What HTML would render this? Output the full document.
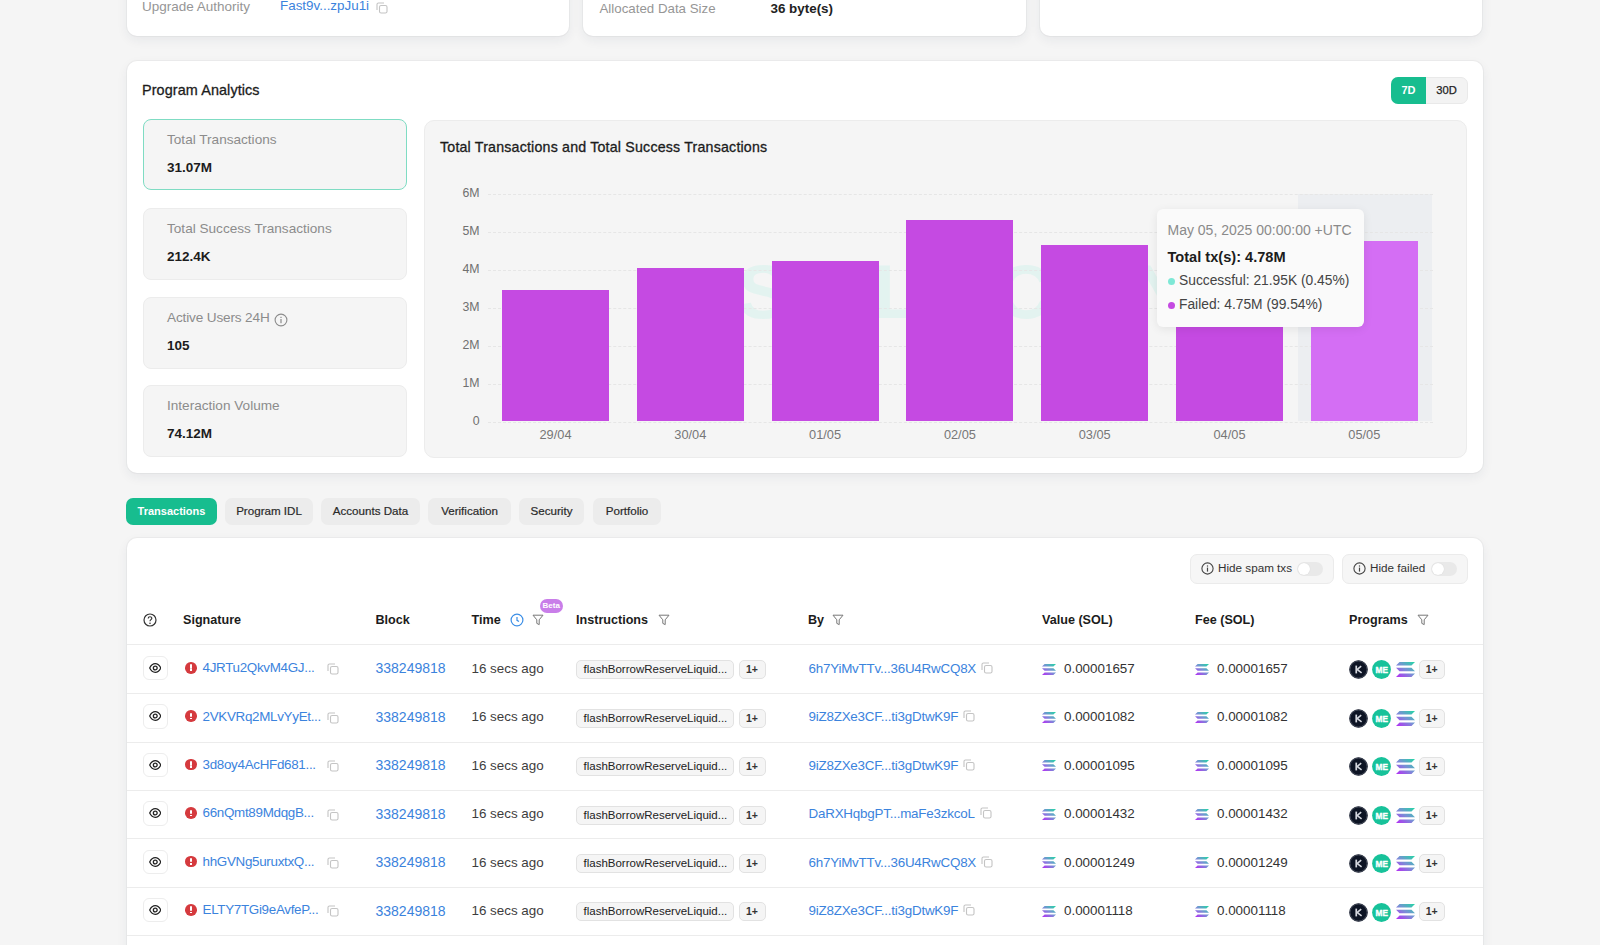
<!DOCTYPE html>
<html><head><meta charset="utf-8">
<style>
*{box-sizing:border-box;margin:0;padding:0}
html,body{width:1600px;height:945px;overflow:hidden;background:#f5f5f5;font-family:"Liberation Sans",sans-serif;color:#1f1f1f}
.abs{position:absolute}
.card{position:absolute;background:#fff;border-radius:10px;box-shadow:0 0 0 1px rgba(0,0,0,0.03),0 4px 12px rgba(30,40,80,0.065)}
.lbl{color:#8a8a8a;font-size:14px}
.link{color:#3b83dd}
.stat{position:absolute;left:143px;width:264px;height:71.5px;background:#f5f5f5;border:1px solid #ececec;border-radius:8px}
.stat .t{position:absolute;left:23px;top:12.2px;font-size:13.6px;color:#8c8c8c;white-space:nowrap}
.stat .v{position:absolute;left:23px;top:40px;font-size:13.5px;font-weight:bold;color:#1c1c1c}
.ylab{position:absolute;width:40px;text-align:right;left:439.6px;font-size:12.3px;color:#707070}
.grid{position:absolute;left:488px;width:945px;border-top:1px dashed #e6e6e6}
.bar{position:absolute;width:107px;background:#c54ae2}
.xlab{position:absolute;width:107px;text-align:center;top:426.6px;font-size:12.8px;color:#777}
.tab{position:absolute;top:498px;height:27px;border-radius:7px;background:#ececec;font-size:11.6px;color:#2a2a2a;text-align:center;line-height:25.5px;-webkit-text-stroke:0.2px #2a2a2a}
.hb{top:553.5px;height:30px;border-radius:7px;background:#f6f6f6;border:1px solid #ebebeb}
.th{top:613px;font-size:12.6px;font-weight:bold;color:#1c1c1c;white-space:nowrap}
.td{font-size:13.4px;white-space:nowrap}
.pill{height:19px;border:1px solid #e2e2e2;background:#f5f5f5;border-radius:5px;font-size:11.5px;color:#222;line-height:17px;padding-left:7px;white-space:nowrap}
</style></head>
<body>
<!-- top cards -->
<div class="card" style="left:127px;top:-20px;width:442px;height:56px"></div>
<div class="card" style="left:583px;top:-20px;width:443px;height:56px"></div>
<div class="card" style="left:1040px;top:-20px;width:442px;height:56px"></div>
<div class="abs lbl" style="left:142px;top:-1.5px;font-size:13.5px;color:#969696">Upgrade Authority</div>
<div class="abs link" style="left:280px;top:-2px;font-size:13.4px">Fast9v...zpJu1i</div><svg class="abs" style="left:376px;top:2px" width="12" height="12" viewBox="0 0 12 12"><rect x="3.5" y="3.5" width="7.5" height="7.5" rx="1.6" fill="none" stroke="#c4c4c4" stroke-width="1.1"/><path d="M1 8 V2.5 C1 1.6 1.6 1 2.5 1 H8" fill="none" stroke="#c4c4c4" stroke-width="1.1"/></svg>
<div class="abs lbl" style="left:599.5px;top:0.5px;font-size:13.3px;color:#969696">Allocated Data Size</div>
<div class="abs" style="left:770.5px;top:0.5px;font-size:13.4px;font-weight:bold;color:#222">36 byte(s)</div>

<!-- analytics card -->
<div class="card" style="left:127px;top:61px;width:1356px;height:412px"></div>
<div class="abs" style="left:142px;top:81.5px;font-size:14.4px;color:#1c1c1c;-webkit-text-stroke:0.3px #1c1c1c;letter-spacing:0.1px;white-space:nowrap">Program Analytics</div>
<div class="abs" style="left:1391px;top:77px;width:76.5px;height:26.7px;border-radius:7px;background:#f3f3f3;border:1px solid #e9e9e9"></div>
<div class="abs" style="left:1391px;top:77px;width:35px;height:26.7px;border-radius:7px 0 0 7px;background:#17bd8f;color:#fff;font-size:11px;font-weight:bold;text-align:center;line-height:26.7px">7D</div>
<div class="abs" style="left:1426px;top:77px;width:41px;height:26.7px;color:#222;font-size:11.2px;-webkit-text-stroke:0.25px #222;text-align:center;line-height:26.7px">30D</div>

<div class="stat" style="top:119.3px;height:71px;border:1.5px solid #7fdcc3">
 <div class="t">Total Transactions</div><div class="v">31.07M</div></div>
<div class="stat" style="top:208px"><div class="t">Total Success Transactions</div><div class="v">212.4K</div></div>
<div class="stat" style="top:297px"><div class="t" style="letter-spacing:-0.15px">Active Users 24H</div><svg class="abs" style="left:129.5px;top:14.5px" width="14" height="14" viewBox="0 0 14 14"><circle cx="7" cy="7" r="5.9" fill="none" stroke="#8c8c8c" stroke-width="1.1"/><rect x="6.4" y="6" width="1.2" height="4.2" fill="#8c8c8c"/><rect x="6.4" y="3.8" width="1.2" height="1.2" fill="#8c8c8c"/></svg><div class="v">105</div></div>
<div class="stat" style="top:385px"><div class="t">Interaction Volume</div><div class="v">74.12M</div></div>

<!-- chart -->
<div class="abs" style="left:424px;top:120px;width:1043px;height:338px;background:#f5f5f5;border:1px solid #ececec;border-radius:10px"></div>
<div class="abs" style="left:440px;top:139.3px;font-size:14.2px;color:#1c1c1c;-webkit-text-stroke:0.3px #1c1c1c;letter-spacing:0.2px;white-space:nowrap">Total Transactions and Total Success Transactions</div>
<div id="chart">
<div class="abs" style="left:738px;top:248px;font-size:76px;font-weight:bold;color:#e3f3f0;letter-spacing:13px;white-space:nowrap">SOLSCAN</div>
<div class="abs" style="left:1298px;top:194px;width:134px;height:227px;background:#eceef1"></div>
<div class="grid" style="top:194.1px"></div>
<div class="ylab" style="top:186.3px">6M</div>
<div class="grid" style="top:232.0px"></div>
<div class="ylab" style="top:224.2px">5M</div>
<div class="grid" style="top:269.9px"></div>
<div class="ylab" style="top:262.1px">4M</div>
<div class="grid" style="top:307.8px"></div>
<div class="ylab" style="top:300.0px">3M</div>
<div class="grid" style="top:345.7px"></div>
<div class="ylab" style="top:337.9px">2M</div>
<div class="grid" style="top:383.6px"></div>
<div class="ylab" style="top:375.8px">1M</div>
<div class="grid" style="top:421.5px"></div>
<div class="ylab" style="top:413.7px">0</div>
<div class="bar" style="left:502.0px;top:290px;height:131px;background:#c54ae2"></div>
<div class="xlab" style="left:502.0px">29/04</div>
<div class="bar" style="left:636.8px;top:268px;height:153px;background:#c54ae2"></div>
<div class="xlab" style="left:636.8px">30/04</div>
<div class="bar" style="left:771.6px;top:261px;height:160px;background:#c54ae2"></div>
<div class="xlab" style="left:771.6px">01/05</div>
<div class="bar" style="left:906.4px;top:219.5px;height:201.5px;background:#c54ae2"></div>
<div class="xlab" style="left:906.4px">02/05</div>
<div class="bar" style="left:1041.2px;top:245px;height:176px;background:#c54ae2"></div>
<div class="xlab" style="left:1041.2px">03/05</div>
<div class="bar" style="left:1176.0px;top:244px;height:177px;background:#c54ae2"></div>
<div class="xlab" style="left:1176.0px">04/05</div>
<div class="bar" style="left:1310.8px;top:240.5px;height:180.5px;background:#d46ef4"></div>
<div class="xlab" style="left:1310.8px">05/05</div>
<div class="abs" style="left:1157px;top:209px;width:207px;height:118px;background:#fafafa;border-radius:6px;box-shadow:0 2px 10px rgba(0,0,0,0.08)">
<div class="abs" style="left:10.5px;top:13.3px;font-size:14px;color:#8a8a8a;white-space:nowrap">May 05, 2025 00:00:00 +UTC</div>
<div class="abs" style="left:10.5px;top:40px;font-size:14.6px;font-weight:bold;color:#1c1c1c;white-space:nowrap">Total tx(s): 4.78M</div>
<div class="abs" style="left:10.5px;top:68.5px;width:7px;height:7px;border-radius:50%;background:#7ee8d6"></div>
<div class="abs" style="left:22px;top:63.8px;font-size:13.8px;color:#444;white-space:nowrap">Successful: 21.95K (0.45%)</div>
<div class="abs" style="left:10.5px;top:92.5px;width:7px;height:7px;border-radius:50%;background:#c54ae2"></div>
<div class="abs" style="left:22px;top:87.5px;font-size:13.8px;color:#444;white-space:nowrap">Failed: 4.75M (99.54%)</div>
</div>
</div>

<!-- tabs -->
<div class="tab" style="left:126px;width:91px;background:#17bd8f;color:#fff;font-weight:bold;font-size:11px;-webkit-text-stroke:0;line-height:26.5px">Transactions</div>
<div class="tab" style="left:225px;width:88px">Program IDL</div>
<div class="tab" style="left:321px;width:99px">Accounts Data</div>
<div class="tab" style="left:428px;width:83px">Verification</div>
<div class="tab" style="left:519px;width:65px">Security</div>
<div class="tab" style="left:593px;width:68px">Portfolio</div>

<!-- table card -->
<div class="card" style="left:127px;top:538px;width:1356px;height:500px"></div>
<div id="table">
<svg width="0" height="0" style="position:absolute"><defs><linearGradient id="sg" x1="0" y1="1" x2="1" y2="0"><stop offset="0" stop-color="#b62cf5"/><stop offset="0.5" stop-color="#7a8fd6"/><stop offset="1" stop-color="#22d8a4"/></linearGradient></defs></svg>
<div class="abs hb" style="left:1190px;width:144px"></div>
<svg class="abs" style="left:1201px;top:562px" width="13" height="13" viewBox="0 0 13 13"><circle cx="6.5" cy="6.5" r="5.6" fill="none" stroke="#444" stroke-width="1.1"/><rect x="5.9" y="5.6" width="1.2" height="4" fill="#444"/><rect x="5.9" y="3.4" width="1.2" height="1.2" fill="#444"/></svg>
<div class="abs" style="left:1218px;top:561px;font-size:11.7px;color:#333;white-space:nowrap">Hide spam txs</div>
<div class="abs" style="left:1297px;top:562px;width:26px;height:14px;border-radius:7px;background:#e9e9e9"><div class="abs" style="left:1px;top:1px;width:12px;height:12px;border-radius:50%;background:#fff;box-shadow:0 0 1px rgba(0,0,0,.15)"></div></div>
<div class="abs hb" style="left:1342px;width:126px"></div>
<svg class="abs" style="left:1353px;top:562px" width="13" height="13" viewBox="0 0 13 13"><circle cx="6.5" cy="6.5" r="5.6" fill="none" stroke="#444" stroke-width="1.1"/><rect x="5.9" y="5.6" width="1.2" height="4" fill="#444"/><rect x="5.9" y="3.4" width="1.2" height="1.2" fill="#444"/></svg>
<div class="abs" style="left:1370px;top:561px;font-size:11.7px;color:#333;white-space:nowrap">Hide failed</div>
<div class="abs" style="left:1431px;top:562px;width:26px;height:14px;border-radius:7px;background:#e9e9e9"><div class="abs" style="left:1px;top:1px;width:12px;height:12px;border-radius:50%;background:#fff;box-shadow:0 0 1px rgba(0,0,0,.15)"></div></div>
<svg class="abs" style="left:143px;top:613px" width="14" height="14" viewBox="0 0 14 14"><circle cx="7" cy="7" r="6" fill="none" stroke="#333" stroke-width="1.2"/><path d="M5.2 5.4 C5.2 3.2 8.8 3.2 8.8 5.3 C8.8 6.6 7 6.7 7 8.2" fill="none" stroke="#333" stroke-width="1.2"/><circle cx="7" cy="10.2" r="0.8" fill="#333"/></svg>
<div class="abs th" style="left:183px">Signature</div>
<div class="abs th" style="left:375.5px">Block</div>
<div class="abs th" style="left:471.5px">Time</div>
<div class="abs th" style="left:576px">Instructions</div>
<div class="abs th" style="left:808px">By</div>
<div class="abs th" style="left:1042px">Value (SOL)</div>
<div class="abs th" style="left:1195px">Fee (SOL)</div>
<div class="abs th" style="left:1349px">Programs</div>
<svg class="abs" style="left:509.5px;top:613px" width="14" height="14" viewBox="0 0 14 14"><circle cx="7" cy="7" r="5.9" fill="none" stroke="#3b8ee6" stroke-width="1.2"/><path d="M7 4 V7.3 L9 8.6" fill="none" stroke="#3b8ee6" stroke-width="1.2"/></svg>
<svg class="abs" style="left:531.5px;top:614px" width="12" height="12" viewBox="0 0 12 12"><path d="M1 1.2 H11 L7.2 5.8 V10.6 L4.8 9.4 V5.8 Z" fill="none" stroke="#777" stroke-width="1" stroke-linejoin="round"/></svg>
<div class="abs" style="left:539.5px;top:599px;width:23.5px;height:13.5px;border-radius:7px;background:#c97ee9;color:#fff;font-size:8px;font-weight:bold;text-align:center;line-height:13.5px">Beta</div>
<svg class="abs" style="left:657.5px;top:614px" width="12" height="12" viewBox="0 0 12 12"><path d="M1 1.2 H11 L7.2 5.8 V10.6 L4.8 9.4 V5.8 Z" fill="none" stroke="#777" stroke-width="1" stroke-linejoin="round"/></svg>
<svg class="abs" style="left:832px;top:614px" width="12" height="12" viewBox="0 0 12 12"><path d="M1 1.2 H11 L7.2 5.8 V10.6 L4.8 9.4 V5.8 Z" fill="none" stroke="#777" stroke-width="1" stroke-linejoin="round"/></svg>
<svg class="abs" style="left:1416.5px;top:614px" width="12" height="12" viewBox="0 0 12 12"><path d="M1 1.2 H11 L7.2 5.8 V10.6 L4.8 9.4 V5.8 Z" fill="none" stroke="#777" stroke-width="1" stroke-linejoin="round"/></svg>
<div class="abs" style="left:127px;top:644px;width:1356px;height:1px;background:#ececec"></div>
<div class="abs" style="left:127px;top:693.05px;width:1356px;height:1px;background:#ececec"></div>
<div class="abs" style="left:143.2px;top:655.72px;width:24.5px;height:24.5px;border:1px solid #ededed;border-radius:6px;display:flex;align-items:center;justify-content:center"><svg width="12.5" height="10" viewBox="0 0 12.5 10" style="margin-left:-1px"><path d="M0.7 5 C2.4 1.5 4.4 0.7 6.25 0.7 C8.1 0.7 10.1 1.5 11.8 5 C10.1 8.5 8.1 9.3 6.25 9.3 C4.4 9.3 2.4 8.5 0.7 5 Z" fill="none" stroke="#222" stroke-width="1.25"/><circle cx="6.25" cy="5" r="1.9" fill="none" stroke="#222" stroke-width="1.3"/></svg></div>
<div class="abs" style="left:185.2px;top:661.92px;width:11.6px;height:11.6px;border-radius:50%;background:#d53a3e"><div class="abs" style="left:4.6px;top:2.3px;width:1.8px;height:4.4px;background:#fff;border-radius:1px"></div><div class="abs" style="left:4.6px;top:7.4px;width:1.8px;height:1.6px;background:#fff"></div></div>
<div class="abs td link" style="left:202.5px;top:660.12px;letter-spacing:-0.3px">4JRTu2QkvM4GJ...</div>
<svg class="abs" style="left:327px;top:663.22px" width="12" height="12" viewBox="0 0 12 12"><rect x="3.5" y="3.5" width="7.5" height="7.5" rx="1.6" fill="none" stroke="#c4c4c4" stroke-width="1.1"/><path d="M1 8 V2.5 C1 1.6 1.6 1 2.5 1 H8" fill="none" stroke="#c4c4c4" stroke-width="1.1"/></svg>
<div class="abs td link" style="left:375.5px;top:660.32px;font-size:14px">338249818</div>
<div class="abs td" style="left:471.5px;top:660.72px;color:#3d3d3d">16 secs ago</div>
<div class="abs pill" style="left:575.5px;top:660.22px;width:158.5px">flashBorrowReserveLiquid...</div>
<div class="abs pill" style="left:738.5px;top:660.22px;width:27px;text-align:center;padding:0;font-weight:bold;font-size:10.5px;color:#333">1+</div>
<div class="abs td link" style="left:808.5px;top:660.72px;white-space:nowrap"><span style="letter-spacing:-0.22px">6h7YiMvTTv...36U4RwCQ8X</span><svg style="margin-left:5px;vertical-align:-1px" width="12" height="12" viewBox="0 0 12 12"><rect x="3.5" y="3.5" width="7.5" height="7.5" rx="1.6" fill="none" stroke="#c4c4c4" stroke-width="1.1"/><path d="M1 8 V2.5 C1 1.6 1.6 1 2.5 1 H8" fill="none" stroke="#c4c4c4" stroke-width="1.1"/></svg></div>
<div class="abs td" style="left:1064px;top:660.72px;color:#333">0.00001657</div>
<svg class="abs" style="left:1042px;top:663.52px" width="14" height="11" viewBox="0 0 14 11"><path d="M2.6 0 H14 L11.4 2.6 H0 Z M0 4.2 H11.4 L14 6.8 H2.6 Z M2.6 8.4 H14 L11.4 11 H0 Z" fill="url(#sg)"/></svg>
<div class="abs td" style="left:1217px;top:660.72px;color:#333">0.00001657</div>
<svg class="abs" style="left:1195px;top:663.52px" width="14" height="11" viewBox="0 0 14 11"><path d="M2.6 0 H14 L11.4 2.6 H0 Z M0 4.2 H11.4 L14 6.8 H2.6 Z M2.6 8.4 H14 L11.4 11 H0 Z" fill="url(#sg)"/></svg>
<svg class="abs" style="left:1349px;top:660.42px" width="19" height="19" viewBox="0 0 19 19"><circle cx="9.5" cy="9.5" r="9.3" fill="#0d1424"/><circle cx="9.5" cy="9.5" r="8.5" fill="none" stroke="#5c6270" stroke-width="0.7"/><rect x="6.4" y="5.6" width="1.7" height="7.8" fill="#d4d7de"/><path d="M8 9.6 L12.2 6.2 M8 9.4 L12.6 12.9" stroke="#d4d7de" stroke-width="1.6" fill="none"/></svg>
<svg class="abs" style="left:1372px;top:660.42px" width="19" height="19" viewBox="0 0 19 19"><circle cx="9.5" cy="9.5" r="9.4" fill="#17c29a"/><text x="3.6" y="12.6" font-family="Liberation Sans" font-weight="bold" font-size="8.6" fill="#fff" stroke="#fff" stroke-width="0.35" textLength="12.4" lengthAdjust="spacingAndGlyphs">ME</text></svg>
<svg class="abs" style="left:1395.5px;top:662.22px" width="19" height="15" viewBox="0 0 14 11"><path d="M2.6 0 H14 L11.4 2.6 H0 Z M0 4.2 H11.4 L14 6.8 H2.6 Z M2.6 8.4 H14 L11.4 11 H0 Z" fill="url(#sg)"/></svg>
<div class="abs pill" style="left:1419px;top:660.22px;width:25.5px;text-align:center;padding:0;font-weight:bold;font-size:10.5px;color:#333">1+</div>
<div class="abs" style="left:127px;top:741.50px;width:1356px;height:1px;background:#ececec"></div>
<div class="abs" style="left:143.2px;top:704.17px;width:24.5px;height:24.5px;border:1px solid #ededed;border-radius:6px;display:flex;align-items:center;justify-content:center"><svg width="12.5" height="10" viewBox="0 0 12.5 10" style="margin-left:-1px"><path d="M0.7 5 C2.4 1.5 4.4 0.7 6.25 0.7 C8.1 0.7 10.1 1.5 11.8 5 C10.1 8.5 8.1 9.3 6.25 9.3 C4.4 9.3 2.4 8.5 0.7 5 Z" fill="none" stroke="#222" stroke-width="1.25"/><circle cx="6.25" cy="5" r="1.9" fill="none" stroke="#222" stroke-width="1.3"/></svg></div>
<div class="abs" style="left:185.2px;top:710.37px;width:11.6px;height:11.6px;border-radius:50%;background:#d53a3e"><div class="abs" style="left:4.6px;top:2.3px;width:1.8px;height:4.4px;background:#fff;border-radius:1px"></div><div class="abs" style="left:4.6px;top:7.4px;width:1.8px;height:1.6px;background:#fff"></div></div>
<div class="abs td link" style="left:202.5px;top:708.57px;letter-spacing:-0.3px">2VKVRq2MLvYyEt...</div>
<svg class="abs" style="left:327px;top:711.6700000000001px" width="12" height="12" viewBox="0 0 12 12"><rect x="3.5" y="3.5" width="7.5" height="7.5" rx="1.6" fill="none" stroke="#c4c4c4" stroke-width="1.1"/><path d="M1 8 V2.5 C1 1.6 1.6 1 2.5 1 H8" fill="none" stroke="#c4c4c4" stroke-width="1.1"/></svg>
<div class="abs td link" style="left:375.5px;top:708.77px;font-size:14px">338249818</div>
<div class="abs td" style="left:471.5px;top:709.17px;color:#3d3d3d">16 secs ago</div>
<div class="abs pill" style="left:575.5px;top:708.67px;width:158.5px">flashBorrowReserveLiquid...</div>
<div class="abs pill" style="left:738.5px;top:708.67px;width:27px;text-align:center;padding:0;font-weight:bold;font-size:10.5px;color:#333">1+</div>
<div class="abs td link" style="left:808.5px;top:709.17px;white-space:nowrap"><span style="letter-spacing:-0.22px">9iZ8ZXe3CF...ti3gDtwK9F</span><svg style="margin-left:5px;vertical-align:-1px" width="12" height="12" viewBox="0 0 12 12"><rect x="3.5" y="3.5" width="7.5" height="7.5" rx="1.6" fill="none" stroke="#c4c4c4" stroke-width="1.1"/><path d="M1 8 V2.5 C1 1.6 1.6 1 2.5 1 H8" fill="none" stroke="#c4c4c4" stroke-width="1.1"/></svg></div>
<div class="abs td" style="left:1064px;top:709.17px;color:#333">0.00001082</div>
<svg class="abs" style="left:1042px;top:711.97px" width="14" height="11" viewBox="0 0 14 11"><path d="M2.6 0 H14 L11.4 2.6 H0 Z M0 4.2 H11.4 L14 6.8 H2.6 Z M2.6 8.4 H14 L11.4 11 H0 Z" fill="url(#sg)"/></svg>
<div class="abs td" style="left:1217px;top:709.17px;color:#333">0.00001082</div>
<svg class="abs" style="left:1195px;top:711.97px" width="14" height="11" viewBox="0 0 14 11"><path d="M2.6 0 H14 L11.4 2.6 H0 Z M0 4.2 H11.4 L14 6.8 H2.6 Z M2.6 8.4 H14 L11.4 11 H0 Z" fill="url(#sg)"/></svg>
<svg class="abs" style="left:1349px;top:708.87px" width="19" height="19" viewBox="0 0 19 19"><circle cx="9.5" cy="9.5" r="9.3" fill="#0d1424"/><circle cx="9.5" cy="9.5" r="8.5" fill="none" stroke="#5c6270" stroke-width="0.7"/><rect x="6.4" y="5.6" width="1.7" height="7.8" fill="#d4d7de"/><path d="M8 9.6 L12.2 6.2 M8 9.4 L12.6 12.9" stroke="#d4d7de" stroke-width="1.6" fill="none"/></svg>
<svg class="abs" style="left:1372px;top:708.87px" width="19" height="19" viewBox="0 0 19 19"><circle cx="9.5" cy="9.5" r="9.4" fill="#17c29a"/><text x="3.6" y="12.6" font-family="Liberation Sans" font-weight="bold" font-size="8.6" fill="#fff" stroke="#fff" stroke-width="0.35" textLength="12.4" lengthAdjust="spacingAndGlyphs">ME</text></svg>
<svg class="abs" style="left:1395.5px;top:710.6700000000001px" width="19" height="15" viewBox="0 0 14 11"><path d="M2.6 0 H14 L11.4 2.6 H0 Z M0 4.2 H11.4 L14 6.8 H2.6 Z M2.6 8.4 H14 L11.4 11 H0 Z" fill="url(#sg)"/></svg>
<div class="abs pill" style="left:1419px;top:708.67px;width:25.5px;text-align:center;padding:0;font-weight:bold;font-size:10.5px;color:#333">1+</div>
<div class="abs" style="left:127px;top:789.95px;width:1356px;height:1px;background:#ececec"></div>
<div class="abs" style="left:143.2px;top:752.62px;width:24.5px;height:24.5px;border:1px solid #ededed;border-radius:6px;display:flex;align-items:center;justify-content:center"><svg width="12.5" height="10" viewBox="0 0 12.5 10" style="margin-left:-1px"><path d="M0.7 5 C2.4 1.5 4.4 0.7 6.25 0.7 C8.1 0.7 10.1 1.5 11.8 5 C10.1 8.5 8.1 9.3 6.25 9.3 C4.4 9.3 2.4 8.5 0.7 5 Z" fill="none" stroke="#222" stroke-width="1.25"/><circle cx="6.25" cy="5" r="1.9" fill="none" stroke="#222" stroke-width="1.3"/></svg></div>
<div class="abs" style="left:185.2px;top:758.82px;width:11.6px;height:11.6px;border-radius:50%;background:#d53a3e"><div class="abs" style="left:4.6px;top:2.3px;width:1.8px;height:4.4px;background:#fff;border-radius:1px"></div><div class="abs" style="left:4.6px;top:7.4px;width:1.8px;height:1.6px;background:#fff"></div></div>
<div class="abs td link" style="left:202.5px;top:757.02px;letter-spacing:-0.3px">3d8oy4AcHFd681...</div>
<svg class="abs" style="left:327px;top:760.12px" width="12" height="12" viewBox="0 0 12 12"><rect x="3.5" y="3.5" width="7.5" height="7.5" rx="1.6" fill="none" stroke="#c4c4c4" stroke-width="1.1"/><path d="M1 8 V2.5 C1 1.6 1.6 1 2.5 1 H8" fill="none" stroke="#c4c4c4" stroke-width="1.1"/></svg>
<div class="abs td link" style="left:375.5px;top:757.22px;font-size:14px">338249818</div>
<div class="abs td" style="left:471.5px;top:757.62px;color:#3d3d3d">16 secs ago</div>
<div class="abs pill" style="left:575.5px;top:757.12px;width:158.5px">flashBorrowReserveLiquid...</div>
<div class="abs pill" style="left:738.5px;top:757.12px;width:27px;text-align:center;padding:0;font-weight:bold;font-size:10.5px;color:#333">1+</div>
<div class="abs td link" style="left:808.5px;top:757.62px;white-space:nowrap"><span style="letter-spacing:-0.22px">9iZ8ZXe3CF...ti3gDtwK9F</span><svg style="margin-left:5px;vertical-align:-1px" width="12" height="12" viewBox="0 0 12 12"><rect x="3.5" y="3.5" width="7.5" height="7.5" rx="1.6" fill="none" stroke="#c4c4c4" stroke-width="1.1"/><path d="M1 8 V2.5 C1 1.6 1.6 1 2.5 1 H8" fill="none" stroke="#c4c4c4" stroke-width="1.1"/></svg></div>
<div class="abs td" style="left:1064px;top:757.62px;color:#333">0.00001095</div>
<svg class="abs" style="left:1042px;top:760.42px" width="14" height="11" viewBox="0 0 14 11"><path d="M2.6 0 H14 L11.4 2.6 H0 Z M0 4.2 H11.4 L14 6.8 H2.6 Z M2.6 8.4 H14 L11.4 11 H0 Z" fill="url(#sg)"/></svg>
<div class="abs td" style="left:1217px;top:757.62px;color:#333">0.00001095</div>
<svg class="abs" style="left:1195px;top:760.42px" width="14" height="11" viewBox="0 0 14 11"><path d="M2.6 0 H14 L11.4 2.6 H0 Z M0 4.2 H11.4 L14 6.8 H2.6 Z M2.6 8.4 H14 L11.4 11 H0 Z" fill="url(#sg)"/></svg>
<svg class="abs" style="left:1349px;top:757.32px" width="19" height="19" viewBox="0 0 19 19"><circle cx="9.5" cy="9.5" r="9.3" fill="#0d1424"/><circle cx="9.5" cy="9.5" r="8.5" fill="none" stroke="#5c6270" stroke-width="0.7"/><rect x="6.4" y="5.6" width="1.7" height="7.8" fill="#d4d7de"/><path d="M8 9.6 L12.2 6.2 M8 9.4 L12.6 12.9" stroke="#d4d7de" stroke-width="1.6" fill="none"/></svg>
<svg class="abs" style="left:1372px;top:757.32px" width="19" height="19" viewBox="0 0 19 19"><circle cx="9.5" cy="9.5" r="9.4" fill="#17c29a"/><text x="3.6" y="12.6" font-family="Liberation Sans" font-weight="bold" font-size="8.6" fill="#fff" stroke="#fff" stroke-width="0.35" textLength="12.4" lengthAdjust="spacingAndGlyphs">ME</text></svg>
<svg class="abs" style="left:1395.5px;top:759.12px" width="19" height="15" viewBox="0 0 14 11"><path d="M2.6 0 H14 L11.4 2.6 H0 Z M0 4.2 H11.4 L14 6.8 H2.6 Z M2.6 8.4 H14 L11.4 11 H0 Z" fill="url(#sg)"/></svg>
<div class="abs pill" style="left:1419px;top:757.12px;width:25.5px;text-align:center;padding:0;font-weight:bold;font-size:10.5px;color:#333">1+</div>
<div class="abs" style="left:127px;top:838.40px;width:1356px;height:1px;background:#ececec"></div>
<div class="abs" style="left:143.2px;top:801.07px;width:24.5px;height:24.5px;border:1px solid #ededed;border-radius:6px;display:flex;align-items:center;justify-content:center"><svg width="12.5" height="10" viewBox="0 0 12.5 10" style="margin-left:-1px"><path d="M0.7 5 C2.4 1.5 4.4 0.7 6.25 0.7 C8.1 0.7 10.1 1.5 11.8 5 C10.1 8.5 8.1 9.3 6.25 9.3 C4.4 9.3 2.4 8.5 0.7 5 Z" fill="none" stroke="#222" stroke-width="1.25"/><circle cx="6.25" cy="5" r="1.9" fill="none" stroke="#222" stroke-width="1.3"/></svg></div>
<div class="abs" style="left:185.2px;top:807.27px;width:11.6px;height:11.6px;border-radius:50%;background:#d53a3e"><div class="abs" style="left:4.6px;top:2.3px;width:1.8px;height:4.4px;background:#fff;border-radius:1px"></div><div class="abs" style="left:4.6px;top:7.4px;width:1.8px;height:1.6px;background:#fff"></div></div>
<div class="abs td link" style="left:202.5px;top:805.47px;letter-spacing:-0.3px">66nQmt89MdqgB...</div>
<svg class="abs" style="left:327px;top:808.57px" width="12" height="12" viewBox="0 0 12 12"><rect x="3.5" y="3.5" width="7.5" height="7.5" rx="1.6" fill="none" stroke="#c4c4c4" stroke-width="1.1"/><path d="M1 8 V2.5 C1 1.6 1.6 1 2.5 1 H8" fill="none" stroke="#c4c4c4" stroke-width="1.1"/></svg>
<div class="abs td link" style="left:375.5px;top:805.67px;font-size:14px">338249818</div>
<div class="abs td" style="left:471.5px;top:806.07px;color:#3d3d3d">16 secs ago</div>
<div class="abs pill" style="left:575.5px;top:805.57px;width:158.5px">flashBorrowReserveLiquid...</div>
<div class="abs pill" style="left:738.5px;top:805.57px;width:27px;text-align:center;padding:0;font-weight:bold;font-size:10.5px;color:#333">1+</div>
<div class="abs td link" style="left:808.5px;top:806.07px;white-space:nowrap"><span style="letter-spacing:-0.22px">DaRXHqbgPT...maFe3zkcoL</span><svg style="margin-left:5px;vertical-align:-1px" width="12" height="12" viewBox="0 0 12 12"><rect x="3.5" y="3.5" width="7.5" height="7.5" rx="1.6" fill="none" stroke="#c4c4c4" stroke-width="1.1"/><path d="M1 8 V2.5 C1 1.6 1.6 1 2.5 1 H8" fill="none" stroke="#c4c4c4" stroke-width="1.1"/></svg></div>
<div class="abs td" style="left:1064px;top:806.07px;color:#333">0.00001432</div>
<svg class="abs" style="left:1042px;top:808.87px" width="14" height="11" viewBox="0 0 14 11"><path d="M2.6 0 H14 L11.4 2.6 H0 Z M0 4.2 H11.4 L14 6.8 H2.6 Z M2.6 8.4 H14 L11.4 11 H0 Z" fill="url(#sg)"/></svg>
<div class="abs td" style="left:1217px;top:806.07px;color:#333">0.00001432</div>
<svg class="abs" style="left:1195px;top:808.87px" width="14" height="11" viewBox="0 0 14 11"><path d="M2.6 0 H14 L11.4 2.6 H0 Z M0 4.2 H11.4 L14 6.8 H2.6 Z M2.6 8.4 H14 L11.4 11 H0 Z" fill="url(#sg)"/></svg>
<svg class="abs" style="left:1349px;top:805.77px" width="19" height="19" viewBox="0 0 19 19"><circle cx="9.5" cy="9.5" r="9.3" fill="#0d1424"/><circle cx="9.5" cy="9.5" r="8.5" fill="none" stroke="#5c6270" stroke-width="0.7"/><rect x="6.4" y="5.6" width="1.7" height="7.8" fill="#d4d7de"/><path d="M8 9.6 L12.2 6.2 M8 9.4 L12.6 12.9" stroke="#d4d7de" stroke-width="1.6" fill="none"/></svg>
<svg class="abs" style="left:1372px;top:805.77px" width="19" height="19" viewBox="0 0 19 19"><circle cx="9.5" cy="9.5" r="9.4" fill="#17c29a"/><text x="3.6" y="12.6" font-family="Liberation Sans" font-weight="bold" font-size="8.6" fill="#fff" stroke="#fff" stroke-width="0.35" textLength="12.4" lengthAdjust="spacingAndGlyphs">ME</text></svg>
<svg class="abs" style="left:1395.5px;top:807.57px" width="19" height="15" viewBox="0 0 14 11"><path d="M2.6 0 H14 L11.4 2.6 H0 Z M0 4.2 H11.4 L14 6.8 H2.6 Z M2.6 8.4 H14 L11.4 11 H0 Z" fill="url(#sg)"/></svg>
<div class="abs pill" style="left:1419px;top:805.57px;width:25.5px;text-align:center;padding:0;font-weight:bold;font-size:10.5px;color:#333">1+</div>
<div class="abs" style="left:127px;top:886.85px;width:1356px;height:1px;background:#ececec"></div>
<div class="abs" style="left:143.2px;top:849.52px;width:24.5px;height:24.5px;border:1px solid #ededed;border-radius:6px;display:flex;align-items:center;justify-content:center"><svg width="12.5" height="10" viewBox="0 0 12.5 10" style="margin-left:-1px"><path d="M0.7 5 C2.4 1.5 4.4 0.7 6.25 0.7 C8.1 0.7 10.1 1.5 11.8 5 C10.1 8.5 8.1 9.3 6.25 9.3 C4.4 9.3 2.4 8.5 0.7 5 Z" fill="none" stroke="#222" stroke-width="1.25"/><circle cx="6.25" cy="5" r="1.9" fill="none" stroke="#222" stroke-width="1.3"/></svg></div>
<div class="abs" style="left:185.2px;top:855.72px;width:11.6px;height:11.6px;border-radius:50%;background:#d53a3e"><div class="abs" style="left:4.6px;top:2.3px;width:1.8px;height:4.4px;background:#fff;border-radius:1px"></div><div class="abs" style="left:4.6px;top:7.4px;width:1.8px;height:1.6px;background:#fff"></div></div>
<div class="abs td link" style="left:202.5px;top:853.92px;letter-spacing:-0.3px">hhGVNg5uruxtxQ...</div>
<svg class="abs" style="left:327px;top:857.02px" width="12" height="12" viewBox="0 0 12 12"><rect x="3.5" y="3.5" width="7.5" height="7.5" rx="1.6" fill="none" stroke="#c4c4c4" stroke-width="1.1"/><path d="M1 8 V2.5 C1 1.6 1.6 1 2.5 1 H8" fill="none" stroke="#c4c4c4" stroke-width="1.1"/></svg>
<div class="abs td link" style="left:375.5px;top:854.12px;font-size:14px">338249818</div>
<div class="abs td" style="left:471.5px;top:854.52px;color:#3d3d3d">16 secs ago</div>
<div class="abs pill" style="left:575.5px;top:854.02px;width:158.5px">flashBorrowReserveLiquid...</div>
<div class="abs pill" style="left:738.5px;top:854.02px;width:27px;text-align:center;padding:0;font-weight:bold;font-size:10.5px;color:#333">1+</div>
<div class="abs td link" style="left:808.5px;top:854.52px;white-space:nowrap"><span style="letter-spacing:-0.22px">6h7YiMvTTv...36U4RwCQ8X</span><svg style="margin-left:5px;vertical-align:-1px" width="12" height="12" viewBox="0 0 12 12"><rect x="3.5" y="3.5" width="7.5" height="7.5" rx="1.6" fill="none" stroke="#c4c4c4" stroke-width="1.1"/><path d="M1 8 V2.5 C1 1.6 1.6 1 2.5 1 H8" fill="none" stroke="#c4c4c4" stroke-width="1.1"/></svg></div>
<div class="abs td" style="left:1064px;top:854.52px;color:#333">0.00001249</div>
<svg class="abs" style="left:1042px;top:857.3199999999999px" width="14" height="11" viewBox="0 0 14 11"><path d="M2.6 0 H14 L11.4 2.6 H0 Z M0 4.2 H11.4 L14 6.8 H2.6 Z M2.6 8.4 H14 L11.4 11 H0 Z" fill="url(#sg)"/></svg>
<div class="abs td" style="left:1217px;top:854.52px;color:#333">0.00001249</div>
<svg class="abs" style="left:1195px;top:857.3199999999999px" width="14" height="11" viewBox="0 0 14 11"><path d="M2.6 0 H14 L11.4 2.6 H0 Z M0 4.2 H11.4 L14 6.8 H2.6 Z M2.6 8.4 H14 L11.4 11 H0 Z" fill="url(#sg)"/></svg>
<svg class="abs" style="left:1349px;top:854.22px" width="19" height="19" viewBox="0 0 19 19"><circle cx="9.5" cy="9.5" r="9.3" fill="#0d1424"/><circle cx="9.5" cy="9.5" r="8.5" fill="none" stroke="#5c6270" stroke-width="0.7"/><rect x="6.4" y="5.6" width="1.7" height="7.8" fill="#d4d7de"/><path d="M8 9.6 L12.2 6.2 M8 9.4 L12.6 12.9" stroke="#d4d7de" stroke-width="1.6" fill="none"/></svg>
<svg class="abs" style="left:1372px;top:854.22px" width="19" height="19" viewBox="0 0 19 19"><circle cx="9.5" cy="9.5" r="9.4" fill="#17c29a"/><text x="3.6" y="12.6" font-family="Liberation Sans" font-weight="bold" font-size="8.6" fill="#fff" stroke="#fff" stroke-width="0.35" textLength="12.4" lengthAdjust="spacingAndGlyphs">ME</text></svg>
<svg class="abs" style="left:1395.5px;top:856.02px" width="19" height="15" viewBox="0 0 14 11"><path d="M2.6 0 H14 L11.4 2.6 H0 Z M0 4.2 H11.4 L14 6.8 H2.6 Z M2.6 8.4 H14 L11.4 11 H0 Z" fill="url(#sg)"/></svg>
<div class="abs pill" style="left:1419px;top:854.02px;width:25.5px;text-align:center;padding:0;font-weight:bold;font-size:10.5px;color:#333">1+</div>
<div class="abs" style="left:127px;top:935.30px;width:1356px;height:1px;background:#ececec"></div>
<div class="abs" style="left:143.2px;top:897.97px;width:24.5px;height:24.5px;border:1px solid #ededed;border-radius:6px;display:flex;align-items:center;justify-content:center"><svg width="12.5" height="10" viewBox="0 0 12.5 10" style="margin-left:-1px"><path d="M0.7 5 C2.4 1.5 4.4 0.7 6.25 0.7 C8.1 0.7 10.1 1.5 11.8 5 C10.1 8.5 8.1 9.3 6.25 9.3 C4.4 9.3 2.4 8.5 0.7 5 Z" fill="none" stroke="#222" stroke-width="1.25"/><circle cx="6.25" cy="5" r="1.9" fill="none" stroke="#222" stroke-width="1.3"/></svg></div>
<div class="abs" style="left:185.2px;top:904.17px;width:11.6px;height:11.6px;border-radius:50%;background:#d53a3e"><div class="abs" style="left:4.6px;top:2.3px;width:1.8px;height:4.4px;background:#fff;border-radius:1px"></div><div class="abs" style="left:4.6px;top:7.4px;width:1.8px;height:1.6px;background:#fff"></div></div>
<div class="abs td link" style="left:202.5px;top:902.37px;letter-spacing:-0.3px">ELTY7TGi9eAvfeP...</div>
<svg class="abs" style="left:327px;top:905.47px" width="12" height="12" viewBox="0 0 12 12"><rect x="3.5" y="3.5" width="7.5" height="7.5" rx="1.6" fill="none" stroke="#c4c4c4" stroke-width="1.1"/><path d="M1 8 V2.5 C1 1.6 1.6 1 2.5 1 H8" fill="none" stroke="#c4c4c4" stroke-width="1.1"/></svg>
<div class="abs td link" style="left:375.5px;top:902.57px;font-size:14px">338249818</div>
<div class="abs td" style="left:471.5px;top:902.97px;color:#3d3d3d">16 secs ago</div>
<div class="abs pill" style="left:575.5px;top:902.47px;width:158.5px">flashBorrowReserveLiquid...</div>
<div class="abs pill" style="left:738.5px;top:902.47px;width:27px;text-align:center;padding:0;font-weight:bold;font-size:10.5px;color:#333">1+</div>
<div class="abs td link" style="left:808.5px;top:902.97px;white-space:nowrap"><span style="letter-spacing:-0.22px">9iZ8ZXe3CF...ti3gDtwK9F</span><svg style="margin-left:5px;vertical-align:-1px" width="12" height="12" viewBox="0 0 12 12"><rect x="3.5" y="3.5" width="7.5" height="7.5" rx="1.6" fill="none" stroke="#c4c4c4" stroke-width="1.1"/><path d="M1 8 V2.5 C1 1.6 1.6 1 2.5 1 H8" fill="none" stroke="#c4c4c4" stroke-width="1.1"/></svg></div>
<div class="abs td" style="left:1064px;top:902.97px;color:#333">0.00001118</div>
<svg class="abs" style="left:1042px;top:905.77px" width="14" height="11" viewBox="0 0 14 11"><path d="M2.6 0 H14 L11.4 2.6 H0 Z M0 4.2 H11.4 L14 6.8 H2.6 Z M2.6 8.4 H14 L11.4 11 H0 Z" fill="url(#sg)"/></svg>
<div class="abs td" style="left:1217px;top:902.97px;color:#333">0.00001118</div>
<svg class="abs" style="left:1195px;top:905.77px" width="14" height="11" viewBox="0 0 14 11"><path d="M2.6 0 H14 L11.4 2.6 H0 Z M0 4.2 H11.4 L14 6.8 H2.6 Z M2.6 8.4 H14 L11.4 11 H0 Z" fill="url(#sg)"/></svg>
<svg class="abs" style="left:1349px;top:902.67px" width="19" height="19" viewBox="0 0 19 19"><circle cx="9.5" cy="9.5" r="9.3" fill="#0d1424"/><circle cx="9.5" cy="9.5" r="8.5" fill="none" stroke="#5c6270" stroke-width="0.7"/><rect x="6.4" y="5.6" width="1.7" height="7.8" fill="#d4d7de"/><path d="M8 9.6 L12.2 6.2 M8 9.4 L12.6 12.9" stroke="#d4d7de" stroke-width="1.6" fill="none"/></svg>
<svg class="abs" style="left:1372px;top:902.67px" width="19" height="19" viewBox="0 0 19 19"><circle cx="9.5" cy="9.5" r="9.4" fill="#17c29a"/><text x="3.6" y="12.6" font-family="Liberation Sans" font-weight="bold" font-size="8.6" fill="#fff" stroke="#fff" stroke-width="0.35" textLength="12.4" lengthAdjust="spacingAndGlyphs">ME</text></svg>
<svg class="abs" style="left:1395.5px;top:904.47px" width="19" height="15" viewBox="0 0 14 11"><path d="M2.6 0 H14 L11.4 2.6 H0 Z M0 4.2 H11.4 L14 6.8 H2.6 Z M2.6 8.4 H14 L11.4 11 H0 Z" fill="url(#sg)"/></svg>
<div class="abs pill" style="left:1419px;top:902.47px;width:25.5px;text-align:center;padding:0;font-weight:bold;font-size:10.5px;color:#333">1+</div>
</div>
</body></html>
